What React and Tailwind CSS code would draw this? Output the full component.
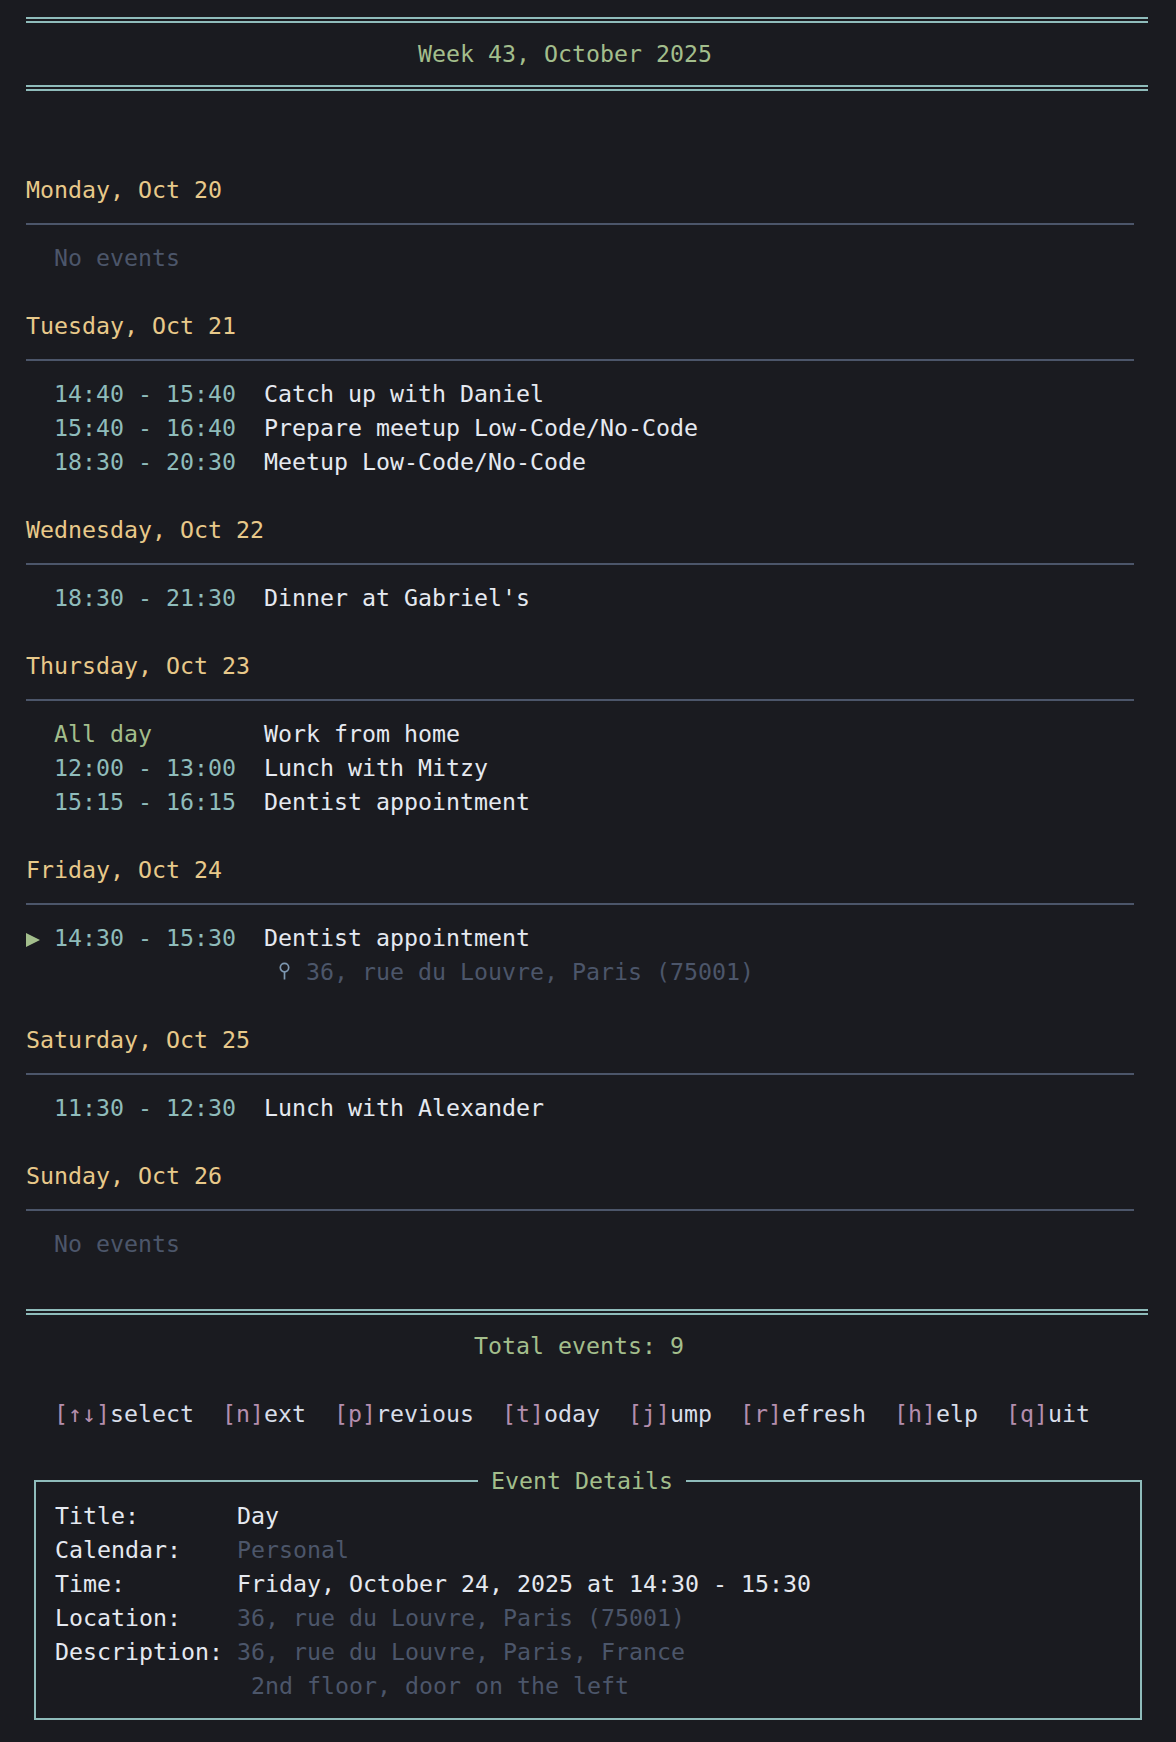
import React from "react";

const days = [
  { label: "Monday, Oct 20", events: [] },
  {
    label: "Tuesday, Oct 21",
    events: [
      { time: "14:40 - 15:40", title: "Catch up with Daniel" },
      { time: "15:40 - 16:40", title: "Prepare meetup Low-Code/No-Code" },
      { time: "18:30 - 20:30", title: "Meetup Low-Code/No-Code" },
    ],
  },
  {
    label: "Wednesday, Oct 22",
    events: [{ time: "18:30 - 21:30", title: "Dinner at Gabriel's" }],
  },
  {
    label: "Thursday, Oct 23",
    events: [
      { time: "All day", title: "Work from home", allDay: true },
      { time: "12:00 - 13:00", title: "Lunch with Mitzy" },
      { time: "15:15 - 16:15", title: "Dentist appointment" },
    ],
  },
  {
    label: "Friday, Oct 24",
    events: [
      {
        time: "14:30 - 15:30",
        title: "Dentist appointment",
        selected: true,
        location: "36, rue du Louvre, Paris (75001)",
      },
    ],
  },
  {
    label: "Saturday, Oct 25",
    events: [{ time: "11:30 - 12:30", title: "Lunch with Alexander" }],
  },
  { label: "Sunday, Oct 26", events: [] },
];

const keys = [
  ["↑↓", "select"],
  ["n", "ext"],
  ["p", "revious"],
  ["t", "oday"],
  ["j", "ump"],
  ["r", "efresh"],
  ["h", "elp"],
  ["q", "uit"],
];

const details = [
  { label: "Title:", value: "Day", dim: false },
  { label: "Calendar:", value: "Personal", dim: true },
  { label: "Time:", value: "Friday, October 24, 2025 at 14:30 - 15:30", dim: false },
  { label: "Location:", value: "36, rue du Louvre, Paris (75001)", dim: true },
  { label: "Description:", value: "36, rue du Louvre, Paris, France", dim: true },
  { label: "", value: " 2nd floor, door on the left", dim: true },
];

// one terminal cell row
function Line({ children, className = "" }) {
  return <div className={`h-[34px] leading-[34px] whitespace-pre ${className}`}>{children}</div>;
}

function DoubleRule() {
  return (
    <div className="h-[34px] flex items-center">
      <div className="w-[1122px] h-[6px] border-y-2 border-[#8fbcbb]" />
    </div>
  );
}

function Rule() {
  return (
    <div className="h-[34px] flex items-center">
      <div className="w-[1108px] h-[2px] bg-[#4c566a]" />
    </div>
  );
}

function Triangle() {
  return (
    <span className="inline-block w-[28px] h-[34px] align-top">
      <svg width="14" height="34" viewBox="0 0 14 34" className="block">
        <polygon points="0,12 14,19 0,26" fill="#a3be8c" />
      </svg>
    </span>
  );
}

function Pin() {
  return (
    <span className="inline-block w-[28px] h-[34px] align-top">
      <svg width="14" height="34" viewBox="0 0 14 34" className="block">
        <circle cx="6.5" cy="12.6" r="4.2" fill="none" stroke="#7d97b0" strokeWidth="1.7" />
        <line x1="6.5" y1="16.8" x2="6.5" y2="24.5" stroke="#7d97b0" strokeWidth="1.7" />
      </svg>
    </span>
  );
}

function EventRow({ ev }) {
  return (
    <>
      <Line>
        {ev.selected ? <Triangle /> : "  "}
        <span className={ev.allDay ? "text-[#a3be8c]" : "text-[#8fbcbb]"}>{ev.time.padEnd(13, " ")}</span>
        {"  "}
        <span className="text-[#e5e9f0]">{ev.title}</span>
      </Line>
      {ev.location && (
        <Line>
          {" ".repeat(18)}
          <Pin />
          <span className="text-[#4c566a]">{ev.location}</span>
        </Line>
      )}
    </>
  );
}

function DayBlock({ day, last }) {
  return (
    <>
      <Line className="text-[#e8c98a]">{day.label}</Line>
      <Rule />
      {day.events.length === 0 ? (
        <Line className="text-[#4c566a]">{"  No events"}</Line>
      ) : (
        day.events.map((ev, i) => <EventRow key={i} ev={ev} />)
      )}
      {!last && <Line> </Line>}
    </>
  );
}

export default function App() {
  return (
    <div className="min-h-screen bg-[#1a1b20] font-['DejaVu_Sans_Mono',monospace] text-[23.25px] text-[#e5e9f0]">
      <div className="pl-[26px] pt-[3px]">
        <DoubleRule />
        <Line className="pl-[392px] text-[#a3be8c]">Week 43, October 2025</Line>
        <DoubleRule />
        <Line> </Line>
        <Line> </Line>

        {days.map((d, i) => (
          <DayBlock key={d.label} day={d} last={i === days.length - 1} />
        ))}

        <Line> </Line>
        <DoubleRule />
        <Line className="pl-[448px] text-[#a3be8c]">Total events: 9</Line>
        <Line> </Line>
        <Line className="pl-[28px] text-[#d8dee9]">
          {keys.map(([k, rest], i) => (
            <span key={k}>
              <span className="text-[#b48ead]">[{k}]</span>
              {rest}
              {i < keys.length - 1 ? "  " : ""}
            </span>
          ))}
        </Line>
        <Line> </Line>

        {/* event details panel */}
        <div className="relative mt-[15px] ml-[8px] w-[1108px] h-[240px] border-2 border-[#8fbcbb] pl-[19px] pt-[17px]">
          <span className="absolute left-[442px] -top-[18px] h-[34px] leading-[34px] px-[13px] bg-[#1a1b20] text-[#a3be8c]">
            Event Details
          </span>
          {details.map((d, i) => (
            <Line key={i}>
              <span className="text-[#e5e9f0]">{d.label.padEnd(13, " ")}</span>
              <span className={d.dim ? "text-[#4c566a]" : "text-[#e5e9f0]"}>{d.value}</span>
            </Line>
          ))}
        </div>
      </div>
    </div>
  );
}
